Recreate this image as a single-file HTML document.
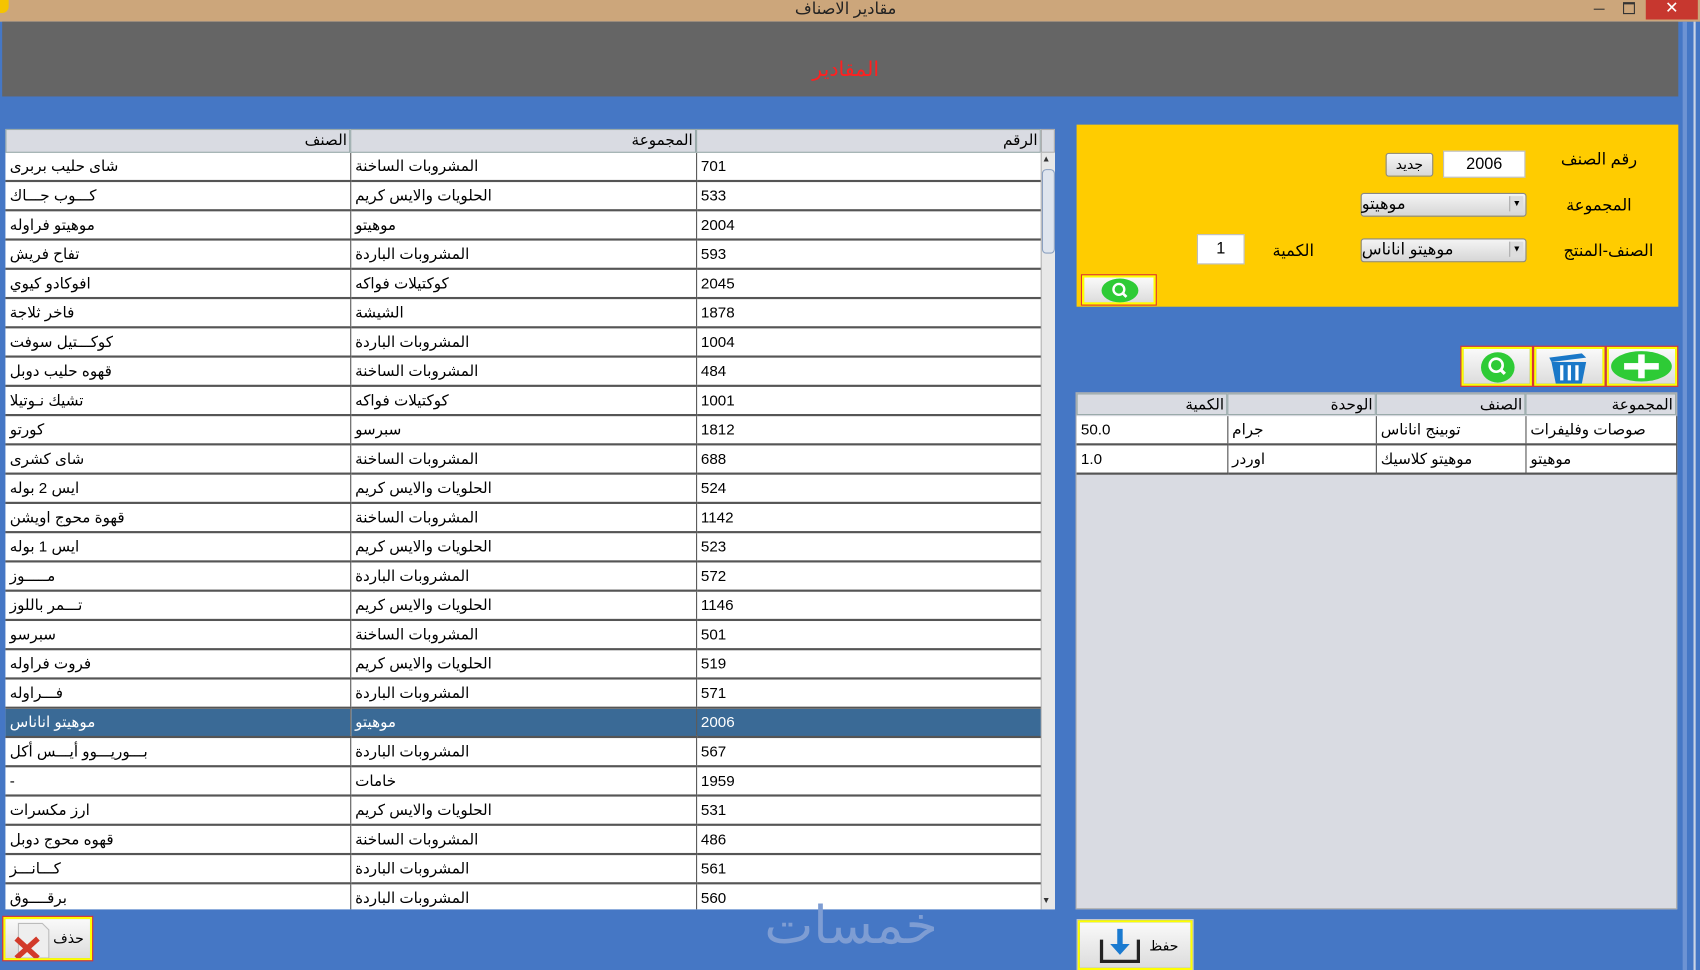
<!DOCTYPE html>
<html><head><meta charset="utf-8"><style>
html,body{margin:0;padding:0;width:1700px;height:970px;overflow:hidden;background:#4577c5}
#w{position:absolute;left:0;top:0;width:1568px;height:895px;transform:scale(1.08418,1.08380);transform-origin:0 0;background:#4577c5;font-family:"Liberation Sans","DejaVu Sans",sans-serif;font-size:14px;color:#000}
.a{position:absolute}
.ar{direction:rtl}
table{border-collapse:collapse;table-layout:fixed}
.t1 td{height:25px;line-height:25px;border-right:1px solid #555;border-bottom:2px solid #555;padding:0 4px;font-size:14px;white-space:nowrap;overflow:hidden;text-align:left;direction:rtl;background:#fff}
.t1 td.n{direction:ltr}
.t1 tr.sel td{background:#3a6a96;color:#fff}
.hd{background:#d9dbe2;border:1px solid #9aa;height:20px;font-size:14px;text-align:right;padding:0 2px;direction:rtl;box-sizing:border-box;line-height:19px}
.btn{position:absolute;background:linear-gradient(#fafafa,#dcdcdc);border:2px solid #ff0;outline:1px solid #d33;box-sizing:border-box}
.lbl{position:absolute;font-size:15px;direction:rtl}
.inp{position:absolute;background:#fff;border:1px solid #bbb;box-sizing:border-box;text-align:center;font-size:15px}
.cmb{position:absolute;background:linear-gradient(#f4f4f4,#d6d6d6);border:1px solid #888;border-radius:3px;box-sizing:border-box;direction:rtl;font-size:15px;padding-right:6px;text-align:left}
.cmb span{position:absolute;right:2px;top:2px;width:12px;height:14px;background:#ddd;border-left:1px solid #aaa;font-size:8px;line-height:14px;text-align:center}
</style></head><body><div id="w">
<div class="a" style="left:0;top:0;width:1568px;height:20px;background:#cca67b"></div>
<div class="a" style="left:0;top:0;width:8px;height:12px;background:#f5c400;border-radius:0 0 6px 0"></div>
<div class="a ar" style="left:680px;top:0;width:200px;text-align:center;font-size:15px;line-height:18px;color:#222">مقادير الاصناف</div>
<div class="a" style="left:1470px;top:8px;width:10px;height:1px;background:#333"></div>
<div class="a" style="left:1497px;top:2px;width:9px;height:8px;border:1px solid #333;border-top-width:2px"></div>
<div class="a" style="left:1518px;top:0;width:48px;height:18px;background:#c7372f;color:#fff;text-align:center;font-size:15px;line-height:16px">✕</div>
<div class="a" style="left:2px;top:20px;width:1546px;height:69px;background:#656565"></div>
<div class="a ar" style="left:680px;top:53px;width:200px;text-align:center;color:#ff2020;font-size:19px">المقادير</div>
<div class="a" style="left:1552px;top:20px;width:4px;height:875px;background:#6d93d3"></div>
<div class="a" style="left:1562px;top:20px;width:2px;height:875px;background:#c9d4e6"></div>
<div class="a" style="left:5px;top:119px;width:968px;height:720px;background:#fff"></div>
<div class="a hd" style="left:5px;top:119px;width:318px;height:22px">الصنف</div>
<div class="a hd" style="left:323px;top:119px;width:319px;height:22px">المجموعة</div>
<div class="a hd" style="left:642px;top:119px;width:318px;height:22px">الرقم</div>
<div class="a" style="left:960px;top:119px;width:13px;height:22px;background:#d9dbe2;border:1px solid #aaa;box-sizing:border-box"></div>
<div class="a" style="left:960px;top:141px;width:13px;height:698px;background:#e8e8e8;border-left:1px solid #bbb;box-sizing:border-box"></div>
<div class="a" style="left:961px;top:142px;font-size:8px;color:#333">▲</div>
<div class="a" style="left:961px;top:826px;font-size:8px;color:#333">▼</div>
<div class="a" style="left:961px;top:156px;width:10px;height:76px;background:#dfe5ee;border:1px solid #8aa0c0;border-radius:4px"></div>
<div class="a" style="left:5px;top:141px;width:955px;height:698px;overflow:hidden">
<table class="t1" style="width:955px">
<colgroup><col style="width:318px"><col style="width:319px"><col style="width:318px"></colgroup>
<tr><td>شاى حليب بربرى</td><td>المشروبات الساخنة</td><td class="n">701</td></tr>
<tr><td>كـــوب جـــاك</td><td>الحلويات والايس كريم</td><td class="n">533</td></tr>
<tr><td>موهيتو فراوله</td><td>موهيتو</td><td class="n">2004</td></tr>
<tr><td>تفاح فريش</td><td>المشروبات الباردة</td><td class="n">593</td></tr>
<tr><td>افوكادو كيوي</td><td>كوكتيلات فواكه</td><td class="n">2045</td></tr>
<tr><td>فاخر ثلاجة</td><td>الشيشة</td><td class="n">1878</td></tr>
<tr><td>كوكـــتيل سوفت</td><td>المشروبات الباردة</td><td class="n">1004</td></tr>
<tr><td>قهوه حليب دوبل</td><td>المشروبات الساخنة</td><td class="n">484</td></tr>
<tr><td>تشيك نـوتيلا</td><td>كوكتيلات فواكه</td><td class="n">1001</td></tr>
<tr><td>كورتو</td><td>سبرسو</td><td class="n">1812</td></tr>
<tr><td>شاى كشرى</td><td>المشروبات الساخنة</td><td class="n">688</td></tr>
<tr><td>ايس 2 بوله</td><td>الحلويات والايس كريم</td><td class="n">524</td></tr>
<tr><td>قهوة محوج اويشن</td><td>المشروبات الساخنة</td><td class="n">1142</td></tr>
<tr><td>ايس 1 بوله</td><td>الحلويات والايس كريم</td><td class="n">523</td></tr>
<tr><td>مـــــوز</td><td>المشروبات الباردة</td><td class="n">572</td></tr>
<tr><td>تـــمر باللوز</td><td>الحلويات والايس كريم</td><td class="n">1146</td></tr>
<tr><td>سبرسو</td><td>المشروبات الساخنة</td><td class="n">501</td></tr>
<tr><td>فروت فراوله</td><td>الحلويات والايس كريم</td><td class="n">519</td></tr>
<tr><td>فـــراوله</td><td>المشروبات الباردة</td><td class="n">571</td></tr>
<tr class="sel"><td>موهيتو اناناس</td><td>موهيتو</td><td class="n">2006</td></tr>
<tr><td>بـــوريـــوو أيـــس أكل</td><td>المشروبات الباردة</td><td class="n">567</td></tr>
<tr><td>-</td><td>خامات</td><td class="n">1959</td></tr>
<tr><td>ارز مكسرات</td><td>الحلويات والايس كريم</td><td class="n">531</td></tr>
<tr><td>قهوه محوج دوبل</td><td>المشروبات الساخنة</td><td class="n">486</td></tr>
<tr><td>كـــانـــز</td><td>المشروبات الباردة</td><td class="n">561</td></tr>
<tr><td>برقــــوق</td><td>المشروبات الباردة</td><td class="n">560</td></tr>
</table></div>
<div class="a" style="left:993px;top:115px;width:555px;height:168px;background:#ffcc00"></div>
<div class="lbl" style="left:1430px;top:138px;width:80px;text-align:right">رقم الصنف</div>
<div class="lbl" style="left:1430px;top:180px;width:75px;text-align:right">المجموعة</div>
<div class="lbl" style="left:1430px;top:222px;width:95px;text-align:right">الصنف-المنتج</div>
<div class="lbl" style="left:1160px;top:222px;width:52px;text-align:right">الكمية</div>
<div class="inp" style="left:1331px;top:139px;width:76px;height:25px;line-height:23px">2006</div>
<div class="a" style="left:1278px;top:141px;width:44px;height:22px;background:linear-gradient(#f6f6f6,#d8d8d8);border:1px solid #888;border-radius:3px;box-sizing:border-box;text-align:center;font-size:13px;line-height:20px;direction:rtl">جديد</div>
<div class="cmb" style="left:1255px;top:178px;width:153px;height:22px;line-height:20px">موهيتو<span>▼</span></div>
<div class="cmb" style="left:1255px;top:220px;width:153px;height:22px;line-height:20px">موهيتو اناناس<span>▼</span></div>
<div class="inp" style="left:1104px;top:216px;width:44px;height:28px;line-height:26px">1</div>
<div class="btn" style="left:998px;top:254px;width:68px;height:27px"><div style="position:absolute;left:16px;top:1px;width:34px;height:22px;border-radius:50%;background:#2ecb36"><svg width="34" height="22" viewBox="0 0 34 22"><circle cx="16" cy="10" r="5" fill="none" stroke="#fff" stroke-width="2.2"/><line x1="19.5" y1="13.5" x2="23" y2="17" stroke="#fff" stroke-width="2.5"/></svg></div></div>
<div class="btn" style="left:1348px;top:320px;width:65px;height:36px;border-color:#ff0"><div style="position:absolute;left:16px;top:3px;width:31px;height:28px;border-radius:50%;background:#2ecb36"><svg width="31" height="28" viewBox="0 0 31 28"><circle cx="14" cy="12" r="6" fill="none" stroke="#fff" stroke-width="2.4"/><line x1="18" y1="16" x2="22" y2="20" stroke="#fff" stroke-width="3"/></svg></div></div>
<div class="btn" style="left:1415px;top:320px;width:65px;height:36px"><svg style="position:absolute;left:2px;top:0" width="60" height="32" viewBox="0 0 60 32"><path d="M10 8 L40 4 L44 8 L12 12Z" fill="#1a78c8"/><path d="M12 12 L44 12 L40 32 L16 32Z" fill="#1a78c8"/><rect x="20" y="15" width="3" height="14" fill="#fff"/><rect x="27" y="15" width="3" height="14" fill="#fff"/><rect x="34" y="15" width="3" height="14" fill="#fff"/></svg></div>
<div class="btn" style="left:1482px;top:320px;width:65px;height:36px"><div style="position:absolute;left:2px;top:2px;width:56px;height:28px;border-radius:50%;background:#2ecb36"><div style="position:absolute;left:12px;top:11px;width:32px;height:6px;background:#fff"></div><div style="position:absolute;left:25px;top:3px;width:6px;height:22px;background:#fff"></div></div></div>
<div class="a" style="left:992px;top:362px;width:555px;height:477px;background:#d9dbe2;border:1px solid #aaa;box-sizing:border-box"></div>
<div class="a hd" style="left:993px;top:363px;width:139px">الكمية</div>
<div class="a hd" style="left:1132px;top:363px;width:137px">الوحدة</div>
<div class="a hd" style="left:1269px;top:363px;width:138px">الصنف</div>
<div class="a hd" style="left:1407px;top:363px;width:139px">المجموعة</div>
<table class="a t1" style="left:993px;top:384px;width:553px">
<colgroup><col style="width:139px"><col style="width:137px"><col style="width:138px"><col style="width:139px"></colgroup>
<tr><td class="n">50.0</td><td>جرام</td><td>توبينج اناناس</td><td>صوصات وفليفرات</td></tr>
<tr><td class="n">1.0</td><td>اوردر</td><td>موهيتو كلاسيك</td><td>موهيتو</td></tr>
</table>
<div class="btn" style="left:3px;top:846px;width:82px;height:40px"><svg style="position:absolute;left:4px;top:2px" width="40" height="34" viewBox="0 0 40 34"><path d="M8 2 L30 2 L36 8 L36 34 L8 34Z" fill="#eee" stroke="#bbb"/><path d="M6 16 L26 34 M26 16 L6 34" stroke="#d23a2a" stroke-width="5"/></svg><div style="position:absolute;left:44px;top:10px;font-size:13px;direction:rtl">حذف</div></div>
<div class="a" style="left:680px;top:826px;width:210px;text-align:center;font-size:48px;color:#7e9dd3;direction:rtl;font-family:'DejaVu Sans',sans-serif">خمسات</div>
<div class="btn" style="left:994px;top:849px;width:106px;height:46px;border-color:#ff0;outline-color:#ccc"><svg style="position:absolute;left:14px;top:4px" width="48" height="36" viewBox="0 0 48 36"><path d="M6 12 L6 32 L40 32 L40 12" fill="none" stroke="#222" stroke-width="3"/><path d="M23 2 L23 22" stroke="#1a7ad0" stroke-width="5"/><path d="M14 16 L23 26 L32 16Z" fill="#1a7ad0"/></svg><div style="position:absolute;left:64px;top:14px;font-size:13px;direction:rtl">حفظ</div></div>
</div></body></html>
